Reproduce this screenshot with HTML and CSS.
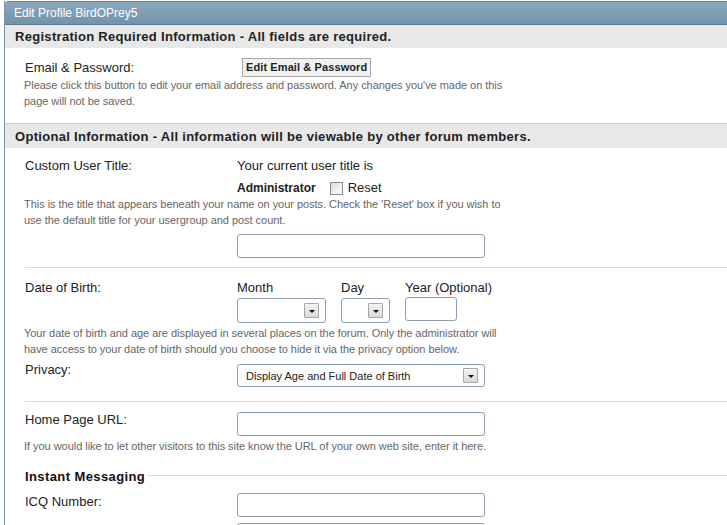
FILE: index.html
```html
<!DOCTYPE html>
<html>
<head>
<meta charset="utf-8">
<title>Edit Profile</title>
<link rel="stylesheet" href="styles.css">
</head>
<body>
<div class="window">
  <div class="titlebar">Edit Profile BirdOPrey5</div>
  <div class="section-head first">Registration Required Information - All fields are required.</div>
  <div class="section">
    <div class="row email-row">
      <div class="label">Email &amp; Password:</div>
      <div class="field"><span class="button">Edit Email &amp; Password</span></div>
    </div>
    <p class="desc">Please click this button to edit your email address and password. Any changes you've made on this<br>page will not be saved.</p>
  </div>
  <div class="section-head second">Optional Information - All information will be viewable by other forum members.</div>
  <div class="section">
    <div class="row title-row">
      <div class="label">Custom User Title:</div>
      <div class="field">Your current user title is</div>
    </div>
    <div class="row admin-row">
      <div class="label"></div>
      <div class="field"><b class="admin">Administrator</b><span class="checkbox"></span><span class="reset">Reset</span></div>
    </div>
    <p class="desc desc-title">This is the title that appears beneath your name on your posts. Check the 'Reset' box if you wish to<br>use the default title for your usergroup and post count.</p>
    <div class="row input-row">
      <div class="label"></div>
      <div class="field"><span class="input wide"></span></div>
    </div>
    <div class="divider d1"></div>
    <div class="row dob-row">
      <div class="label">Date of Birth:</div>
      <div class="field dob">
        <div class="dob-col month"><div class="dob-label">Month</div><div class="select month-sel"><span></span><span class="arrow"></span></div></div>
        <div class="dob-col day"><div class="dob-label">Day</div><div class="select day-sel"><span></span><span class="arrow"></span></div></div>
        <div class="dob-col year"><div class="dob-label">Year (Optional)</div><span class="input year-in"></span></div>
      </div>
    </div>
    <p class="desc desc-dob">Your date of birth and age are displayed in several places on the forum. Only the administrator will<br>have access to your date of birth should you choose to hide it via the privacy option below.</p>
    <div class="row privacy-row">
      <div class="label">Privacy:</div>
      <div class="field"><div class="select wide privacy-sel"><span class="sel-text">Display Age and Full Date of Birth</span><span class="arrow"></span></div></div>
    </div>
    <div class="divider d2"></div>
    <div class="row url-row">
      <div class="label">Home Page URL:</div>
      <div class="field"><span class="input wide"></span></div>
    </div>
    <p class="desc desc-url">If you would like to let other visitors to this site know the URL of your own web site, enter it here.</p>
    <div class="legend"><span class="legend-text">Instant Messaging</span><span class="legend-line"></span></div>
    <div class="row icq-row">
      <div class="label">ICQ Number:</div>
      <div class="field"><span class="input wide"></span></div>
    </div>
    <div class="row next-row">
      <div class="label"></div>
      <div class="field"><span class="input wide"></span></div>
    </div>
  </div>
</div>
</body>
</html>
```
FILE: styles.css
```css
html, body {
  margin: 0;
  padding: 0;
  background: #ffffff;
  overflow: hidden;
}
body {
  font-family: "Liberation Sans", Arial, sans-serif;
  color: #222;
  width: 727px;
  height: 525px;
}
.window {
  margin: 1px 0 0 4px;
  border-left: 1px solid #7b96ac;
  height: 524px;
  overflow: hidden;
}
.titlebar {
  height: 22px;
  line-height: 22px;
  border-top: 1px solid #657f95;
  border-bottom: 1px solid #5d7a91;
  border-top-left-radius: 5px;
  background: linear-gradient(#8ca8bd, #7193ab);
  color: #fff;
  font-size: 12px;
  padding-left: 10px;
  margin-left: -1px;
}
.section-head {
  background: #e8e8e8;
  font-weight: bold;
  font-size: 13px;
  letter-spacing: 0.3px;
  padding-left: 10px;
  color: #222;
}
.section-head.first {
  border-top: 1px solid #e4ebf1;
  height: 22px;
  line-height: 22px;
}
.section-head.second {
  border-top: 1px solid #cfcfcf;
  height: 24px;
  line-height: 26px;
  margin-top: 14px;
}
.section {
  padding-left: 20px;
}
.row {
  display: grid;
  grid-template-columns: 212px 1fr;
  font-size: 13px;
  line-height: 16px;
}
.label {
  color: #222;
}
.desc {
  margin: 0 0 0 -1px;
  font-size: 11px;
  letter-spacing: -0.04px;
  line-height: 16px;
  color: #666;
}
.email-row {
  margin-top: 10px;
  align-items: center;
  height: 19px;
}
.button {
  display: inline-block;
  height: 17px;
  line-height: 17px;
  padding: 0 3px;
  border: 1px solid #a9a9a9;
  background: #f1f1f1;
  font-size: 11px;
  font-weight: bold;
  color: #222;
  margin-left: 5px;
  letter-spacing: 0.1px;
}
.title-row {
  margin-top: 10px;
}
.admin-row {
  margin-top: 6px;
}
.admin-row .field {
  display: flex;
  align-items: center;
}
.admin {
  font-size: 12px;
  color: #222;
}
.checkbox {
  width: 11px;
  height: 11px;
  border: 1px solid #8c8c8c;
  background: linear-gradient(135deg, #dcdcdc, #ffffff);
  margin-left: 14px;
  margin-right: 5px;
}
.reset {
  font-size: 13px;
}
.input-row {
  margin-top: 6px;
}
.input {
  display: block;
  box-sizing: border-box;
  height: 24px;
  border: 1px solid #8d9fb1;
  border-radius: 3px;
  background: #fff;
}
.input.wide, .select.wide {
  width: 248px;
}
.divider {
  height: 1px;
  background: #d3dde6;
}
.d1 {
  margin-top: 9px;
}
.d2 {
  margin-top: 14px;
}
.dob-row {
  margin-top: 12px;
}
.dob {
  display: flex;
  gap: 15px;
}
.dob-col {
  min-width: 0;
  white-space: nowrap;
}
.dob-label {
  height: 16px;
}
.month { width: 89px; }
.day { width: 49px; }
.year { width: 52px; }
.select {
  box-sizing: border-box;
  display: flex;
  justify-content: space-between;
  align-items: center;
  border: 1px solid #8d9fb1;
  border-radius: 3px;
  background: #fff;
  padding: 0 6px 0 8px;
}
.month-sel, .day-sel {
  margin-top: 2px;
  height: 25px;
}
.year-in {
  margin-top: 1px;
  height: 24px;
  width: 52px;
}
.arrow {
  position: relative;
  width: 13px;
  height: 13px;
  border: 1px solid #a7a7a7;
  background: linear-gradient(#f4f4f4, #d9d9d9);
  border-radius: 1px;
}
.arrow::after {
  content: "";
  position: absolute;
  left: 4px;
  top: 6px;
  border-left: 3px solid transparent;
  border-right: 3px solid transparent;
  border-top: 3px solid #111;
}
.desc-dob {
  margin-top: 2px;
}
.privacy-row {
  margin-top: 5px;
}
.privacy-sel {
  margin-top: 2px;
  height: 23px;
  font-size: 11px;
  color: #222;
}
.sel-text {
  line-height: 14px;
}
.url-row {
  margin-top: 10px;
}
.desc-url {
  margin-top: 2px;
}
.legend {
  display: flex;
  align-items: center;
  margin-top: 14px;
  height: 16px;
}
.legend-text {
  font-size: 13px;
  font-weight: bold;
  letter-spacing: 0.4px;
  color: #111;
  white-space: nowrap;
}
.legend-line {
  flex: 1;
  height: 1px;
  background: #d3dde6;
  margin-left: 2px;
  margin-top: -2px;
}
.icq-row {
  margin-top: 9px;
}
.icq-row .label {
  margin-top: 1px;
}
.next-row {
  margin-top: 6px;
}
```
